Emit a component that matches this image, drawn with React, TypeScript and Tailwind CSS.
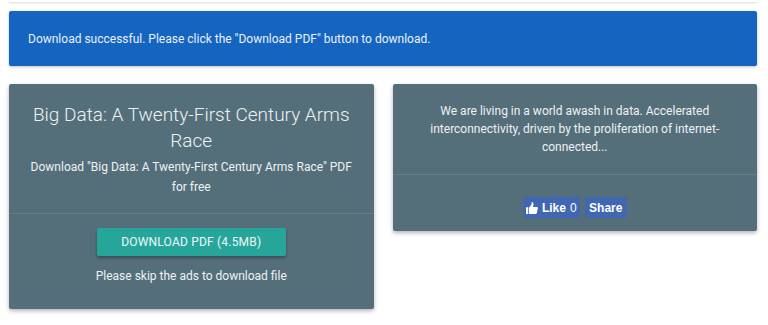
export default function App() {
  return (
    <div className="min-h-[325px] bg-white pl-[9px] pr-[11px] font-['Roboto','Liberation_Sans',sans-serif]">
      <div className="h-[2px] bg-white shadow-[0_1px_2px_rgba(0,0,0,0.15)]" />

      <div className="mt-[9px] flex h-[55px] items-center rounded-[2px] bg-[#1565c0] px-[19px] text-[12px] text-[#e8f0fb] shadow-[0_1px_3px_rgba(0,0,0,0.25)]">
        Download successful. Please click the "Download PDF" button to download.
      </div>

      <div className="mt-[18px] grid grid-cols-2 items-start gap-[19px]">
        <div className="rounded-[2px] bg-[#546e7a] text-center text-[#eef2f4] shadow-[0_2px_4px_rgba(0,0,0,0.3)]">
          <div className="border-b border-white/10 px-5 pt-[18px] pb-[16px]">
            <h2 className="text-[19px] leading-[26px] font-light">
              Big Data: A Twenty-First Century Arms Race
            </h2>
            <p className="mt-[3px] text-[12px] leading-[20px]">
              Download "Big Data: A Twenty-First Century Arms Race" PDF for free
            </p>
          </div>
          <div className="flex flex-col items-center pt-[14px] pb-[23px]">
            <button className="flex h-[28px] w-[189px] items-center justify-center rounded-[2px] bg-[#26a69a] text-[12px] tracking-[0.2px] text-[#eef8f7] uppercase shadow-[0_2px_3px_rgba(0,0,0,0.3)]">
              Download PDF (4.5MB)
            </button>
            <p className="mt-[10px] text-[12px] leading-[20px]">
              Please skip the ads to download file
            </p>
          </div>
        </div>

        <div className="rounded-[2px] bg-[#546e7a] text-center text-[#eef2f4] shadow-[0_2px_4px_rgba(0,0,0,0.3)]">
          <div className="border-b border-white/10 px-[30px] pt-[18px] pb-[18px]">
            <p className="text-[12px] leading-[18px]">
              We are living in a world awash in data. Accelerated interconnectivity, driven by the proliferation of internet-connected...
            </p>
          </div>
          <div className="flex justify-center gap-[5px] pt-[22px] pb-[13px] font-['Liberation_Sans',sans-serif]">
            <span className="flex h-[21px] w-[57px] items-center justify-center gap-[4px] rounded-[3px] bg-[#4267b2] text-[12px] text-white">
              <svg width="12" height="12" viewBox="0 0 16 16" fill="currentColor">
                <path d="M0 7h3v9H0z" />
                <path d="M4 7.5 7.5 3V0.5C7.5 0 8 0 8.5 0.2 10 1 10.3 2.6 9.8 4.5L9.3 6.5H14.5C15.5 6.5 16 7.3 15.8 8.2L14.4 14.8C14.2 15.6 13.6 16 12.8 16H4z" />
              </svg>
              <span className="font-bold">Like</span>
              <span>0</span>
            </span>
            <span className="flex h-[21px] w-[42px] items-center justify-center rounded-[3px] bg-[#4267b2] text-[12px] font-bold text-white">
              Share
            </span>
          </div>
        </div>
      </div>
    </div>
  );
}
